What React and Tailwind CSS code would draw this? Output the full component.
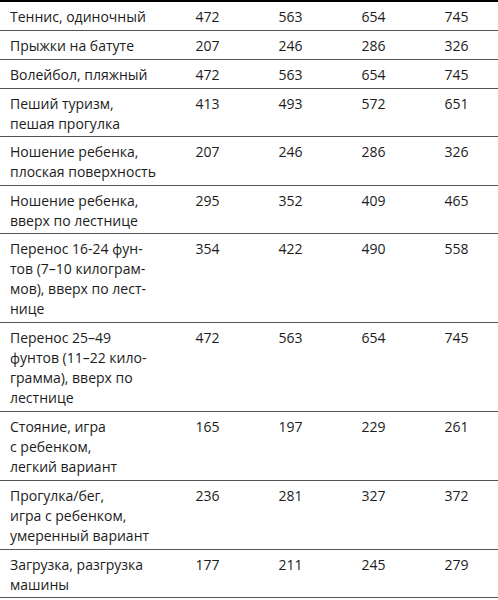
import React from 'react';

const rows = [
  [['Теннис, одиночный'], 472, 563, 654, 745],
  [['Прыжки на батуте'], 207, 246, 286, 326],
  [['Волейбол, пляжный'], 472, 563, 654, 745],
  [['Пеший туризм,', 'пешая прогулка'], 413, 493, 572, 651],
  [['Ношение ребенка,', 'плоская поверхность'], 207, 246, 286, 326],
  [['Ношение ребенка,', 'вверх по лестнице'], 295, 352, 409, 465],
  [['Перенос 16-24 фун-', 'тов (7–10 килограм-', 'мов), вверх по лест-', 'нице'], 354, 422, 490, 558],
  [['Перенос 25–49', 'фунтов (11–22 кило-', 'грамма), вверх по', 'лестнице'], 472, 563, 654, 745],
  [['Стояние, игра', 'с ребенком,', 'легкий вариант'], 165, 197, 229, 261],
  [['Прогулка/бег,', 'игра с ребенком,', 'умеренный вариант'], 236, 281, 327, 372],
  [['Загрузка, разгрузка', 'машины'], 177, 211, 245, 279],
];

export default function App() {
  return (
    <div
      className="w-[498px] bg-white text-[#1c1c1c] border-t-2 border-black"
      style={{ fontFamily: '"Open Sans", "Liberation Sans", sans-serif' }}
    >
      {rows.map(([label, ...nums], i) => (
        <div
          key={i}
          className={`grid grid-cols-[166px_83px_83px_83px_83px] border-b border-[#555] text-[14px] leading-[20px] pt-[5px] ${
            label.length === 2 && i !== 4 ? 'pb-[2px]' : 'pb-[3px]'
          }`}
        >
          <div className="pl-[10px]">
            {label.map((l, j) => (
              <div key={j}>{l}</div>
            ))}
          </div>
          {nums.map((n, j) => (
            <div key={j} className="text-center">
              {n}
            </div>
          ))}
        </div>
      ))}
    </div>
  );
}
